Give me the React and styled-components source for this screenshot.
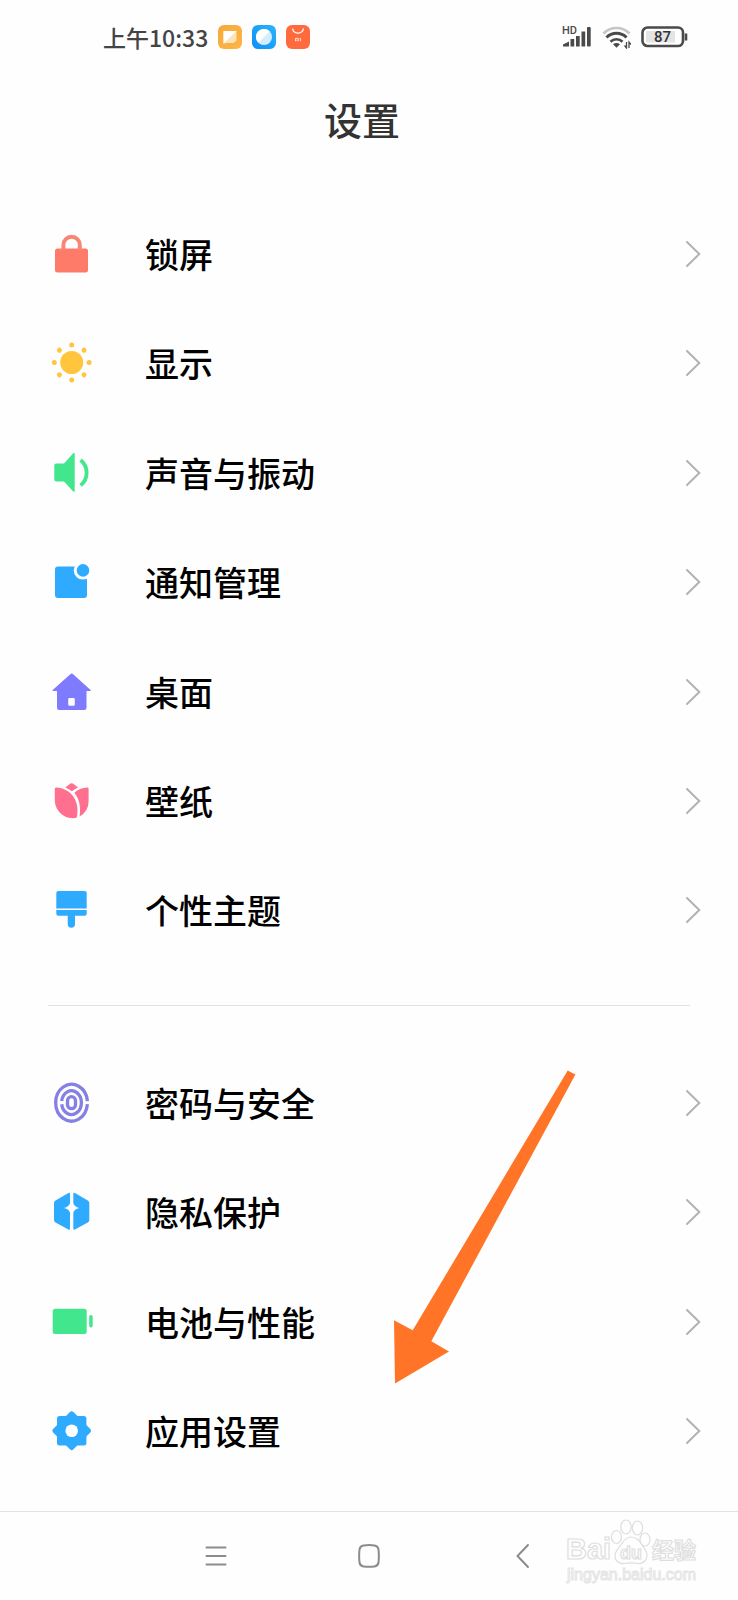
import React from "react";
import styled, { createGlobalStyle } from "styled-components";

const GlobalStyle = createGlobalStyle`
  * {
    box-sizing: border-box;
  }
  body {
    margin: 0;
    background-color: #fefefe;
    font-family: "Noto Sans CJK SC", sans-serif;
  }
`;

const Screen = styled.div`
  position: relative;
  display: flex;
  flex-direction: column;
  min-height: 100vh;
`;

const StatusBar = styled.header`
  display: flex;
  justify-content: space-between;
  align-items: center;
  height: 74px;
  padding: 0 50px 0 103px;
  color: #444;
`;

const StatusGroup = styled.div`
  display: flex;
  align-items: center;
  gap: 10px;
`;

const Clock = styled.time`
  font-size: 23px;
  font-weight: 500;
  line-height: 32px;
`;

const Title = styled.h1`
  margin: 0;
  padding: 18px 14px 53px 0;
  color: #333;
  font-size: 38px;
  font-weight: 500;
  line-height: 54px;
  text-align: center;
`;

const Main = styled.main`
  display: flex;
  flex: 1;
  flex-direction: column;
  padding-bottom: 25px;
`;

const Group = styled.ul`
  display: flex;
  flex: ${(props) => props.$rows} 0 auto;
  flex-direction: column;
  margin: 0;
  padding: 0;
  list-style: none;
`;

const Item = styled.li`
  display: flex;
  flex: 1;
  min-height: 80px;
`;

const Row = styled.button`
  display: flex;
  flex: 1;
  align-items: center;
  gap: 51px;
  padding: 0 37px 0 50px;
  border: none;
  background: none;
  color: #000;
  font-family: inherit;
  text-align: left;
  cursor: pointer;
`;

const Label = styled.span`
  flex: 1;
  font-size: 34px;
  font-weight: 500;
  line-height: 48px;
`;

const Divider = styled.hr`
  width: auto;
  height: 1px;
  margin: 40px 48px 42px;
  border: none;
  background-color: #e2e2e2;
`;

const NavBar = styled.nav`
  position: relative;
  display: flex;
  justify-content: center;
  align-items: center;
  gap: 107px;
  height: 89px;
  border-top: 1px solid #e2e2e2;
`;

const NavButton = styled.button`
  display: flex;
  justify-content: center;
  align-items: center;
  width: 46px;
  height: 46px;
  padding: 0;
  border: none;
  background: none;
  cursor: pointer;
`;

const Pointer = styled.svg`
  position: absolute;
  top: 1070px;
  left: 394px;
  pointer-events: none;
`;

const Watermark = styled.div`
  position: absolute;
  right: 38px;
  bottom: 10px;
  width: 134px;
  height: 74px;
  pointer-events: none;
`;

const ICONS = {
  lock: (
    <>
      <rect x="5" y="16.4" width="33" height="24" rx="2.5" fill="#ff7b69" />
      <path d="M13.4 18v-5a8.2 8.2 0 0 1 16.4 0v5" fill="none" stroke="#f98573" strokeWidth="4" />
    </>
  ),
  sun: (
    <g fill="#ffc53d">
      <circle cx="21.7" cy="21.5" r="11.5" />
      {[0, 45, 90, 135, 180, 225, 270, 315].map((angle) => (
        <circle key={angle} cx="21.7" cy="4.1" r="2.5" transform={`rotate(${angle} 21.7 21.5)`} />
      ))}
    </g>
  ),
  sound: (
    <g fill="#42e68d">
      <path d="M6.3 12.5H14L23 2.400q1.700-1.400 1.700.6v36.600q0 2-1.700.6L14 30.500H6.300q-2 0-2-2v-14q0-2 2-2z" />
      <path d="M30.600 9A16.400 16.400 0 0 1 30.600 34.400" fill="none" stroke="#42e68d" strokeWidth="3.800" />
    </g>
  ),
  notification: (
    <>
      <rect x="5" y="6.4" width="32" height="31.6" rx="3" fill="#2eaaff" />
      <circle cx="33" cy="10.4" r="9.2" fill="#fefefe" />
      <circle cx="33" cy="10.4" r="6.3" fill="#2eaaff" />
    </>
  ),
  home: (
    <path
      fill="#7f7bff"
      fillRule="evenodd"
      d="M20.3 4.2q1.4-1.4 2.8 0L40.6 20q.9 1-.5 1H36.5v16.5q0 2.5-2.5 2.5H9.5Q7 40 7 37.5V21H3.2q-1.4 0-.5-1zM19.600 28q-1.400 0-1.400 1.400v4.800q0 1.500 1.400 1.500h3.800q1.400 0 1.400-1.500v-4.800q0-1.400-1.400-1.400z"
    />
  ),
  tulip: (
    <g fill="#ff6f90">
      <path d="M15.300 8.400l5.200-3.800q1.200-.8 2.400 0l5.200 3.800q-3.600 1.300-6.200 3.900-2.800-2.500-6.600-3.900z" />
      <path d="M6.200 8.600C18.500 9.200 27.500 18.500 27.500 31q0 4-.8 7.700A18 18 0 0 1 4.800 22V10q0-1.400 1.400-1.400z" />
      <path d="M37.200 8.600q1.400 0 1.400 1.400v12A17.500 17.500 0 0 1 29.600 37.400C31 28 29.500 20 24.300 14c3.500-3.500 8-5.200 12.900-5.400z" />
    </g>
  ),
  brush: (
    <g fill="#2eaaff">
      <path d="M8.300 3h26.400q2 0 2 2v15.500H6.300V5q0-2 2-2z" />
      <path d="M6.300 21.900h30.400v3.800q0 2-2 2H25v8.400a3.650 3.650 0 0 1-7.300 0v-8.400H8.300q-2 0-2-2z" />
    </g>
  ),
  fingerprint: (
    <g fill="none" stroke="#8580e4" strokeWidth="3.300">
      <path d="M37.400 20.200A15.900 18.400 0 1 0 37.400 23.200" />
      <path d="M11.700 23.300A9.900 11.900 0 1 0 11.700 20" />
      <rect x="17.500" y="15.700" width="8" height="12" rx="4" />
    </g>
  ),
  privacy: (
    <g fill="#2eaaff">
      <path d="M20 4v9c-.6 2.700-2.500 4-6 4.900 3.500.9 5.400 2.300 6 4.900v15.700q0 1.800-1.600 1L5.500 32.500Q4 31.700 4 30V13q0-1.700 1.500-2.500L18.400 3Q20 2.200 20 4z" />
      <path d="M23.300 4v9c.6 2.700 2.500 4 6 4.900-3.500.9-5.400 2.300-6 4.900v15.700q0 1.800 1.600 1l12.900-7q1.500-.8 1.500-2.500V13q0-1.700-1.500-2.500L24.900 3q-1.600-.8-1.600 1z" />
    </g>
  ),
  battery: (
    <g fill="#42e68d">
      <rect x="2.7" y="8.8" width="34" height="25.3" rx="2.5" />
      <rect x="39.2" y="15" width="3.5" height="12.5" rx="1.7" />
    </g>
  ),
  gear: (
    <g fill="#2eaaff">
      <rect x="7" y="7" width="29.4" height="29.4" rx="2.5" />
      <rect x="7.300" y="7.300" width="28.800" height="28.800" rx="2.500" transform="rotate(45 21.700 21.700)" />
      <circle cx="21.7" cy="21.7" r="6.3" fill="#fefefe" />
    </g>
  ),
};

const groups = [
  [
    { icon: "lock", label: "锁屏" },
    { icon: "sun", label: "显示" },
    { icon: "sound", label: "声音与振动" },
    { icon: "notification", label: "通知管理" },
    { icon: "home", label: "桌面" },
    { icon: "tulip", label: "壁纸" },
    { icon: "brush", label: "个性主题" },
  ],
  [
    { icon: "fingerprint", label: "密码与安全" },
    { icon: "privacy", label: "隐私保护" },
    { icon: "battery", label: "电池与性能" },
    { icon: "gear", label: "应用设置" },
  ],
];

const AppIcons = () => (
  <>
    <svg width="24" height="24" viewBox="0 0 24 24">
      <defs>
        <linearGradient id="note" x1="0" y1="0" x2="1" y2="1">
          <stop offset="0" stopColor="#f5a93c" />
          <stop offset="1" stopColor="#ffb646" />
        </linearGradient>
      </defs>
      <rect width="24" height="24" rx="6" fill="url(#note)" />
      <path d="M5.5 6h13v9.5l-3 2.500h-7l-3 1z" fill="#ffe3b8" />
      <path d="M5.5 6h13L5.500 18.500z" fill="#fff" />
    </svg>
    <svg width="24" height="24" viewBox="0 0 24 24">
      <defs>
        <linearGradient id="browser" x1="0" y1="1" x2="1" y2="0">
          <stop offset="0" stopColor="#0a90f5" />
          <stop offset="1" stopColor="#2cb4fb" />
        </linearGradient>
      </defs>
      <rect width="24" height="24" rx="6" fill="url(#browser)" />
      <circle cx="12" cy="12" r="8" fill="#d3edfd" />
      <path d="M17.7 6.3A8 8 0 0 0 6.3 17.7z" fill="#fff" />
    </svg>
    <svg width="24" height="24" viewBox="0 0 24 24">
      <rect width="24" height="24" rx="6" fill="#ff6b3d" />
      <path d="M6.5 3.5a5.6 5.6 0 0 0 11 0" fill="none" stroke="#fff" strokeWidth="1.3" />
      <path d="M9.5 16.2v-2.8h2.800v2.800M11 14.600v1.600M14.400 13v3.200" fill="none" stroke="#ffe0d2" strokeWidth="1" />
    </svg>
  </>
);

const Signal = () => (
  <svg width="30" height="24" viewBox="0 0 30 24" fill="#4a4a4a">
    <text x="0" y="9" fontFamily="Roboto, sans-serif" fontSize="11" fontWeight="500">
      HD
    </text>
    <path d="M1 21.500v-2l6-3v5z" />
    <rect x="8.5" y="14" width="3.700" height="7.500" />
    <rect x="14" y="11" width="3.700" height="10.500" />
    <rect x="19.500" y="6.500" width="3.700" height="15" />
    <rect x="25" y="2" width="3.700" height="19.500" rx="1" />
  </svg>
);

const Wifi = () => (
  <svg width="29" height="24" viewBox="0 0 29 24" fill="none" strokeWidth="2.6">
    <path d="M1.500 8.500a18 18 0 0 1 26 0" stroke="#c6c6c6" />
    <path d="M4.500 12.500a14 14 0 0 1 20 0" stroke="#4a4a4a" strokeWidth="3" />
    <path d="M8.500 16.700a8.600 8.600 0 0 1 12 0" stroke="#4a4a4a" />
    <path d="M11 19.200q3.500-2.500 7 0l-3.500 3.600z" fill="#4a4a4a" />
    <path d="M24.500 17v6l-2-2.500M27 23v-6l2 2.500" stroke="#4a4a4a" strokeWidth="1.3" />
  </svg>
);

const BatteryLevel = () => (
  <svg width="47" height="22" viewBox="0 0 47 22">
    <rect x="1.5" y="1.5" width="40.5" height="18.5" rx="5" fill="none" stroke="#4a4a4a" strokeWidth="2.6" />
    <rect x="5" y="5" width="29" height="11.5" rx="1" fill="#e4e4e4" />
    <path d="M45 7.500v7" stroke="#4a4a4a" strokeWidth="2.6" />
    <text x="21.5" y="16.3" textAnchor="middle" fontFamily="Roboto, sans-serif" fontSize="15" fontWeight="500" fill="#333">
      87
    </text>
  </svg>
);

const Chevron = () => (
  <svg width="16" height="28" viewBox="0 0 16 28" fill="none" stroke="#b2b2b2" strokeWidth="2">
    <path d="M2 2l12.300 12L2 26" strokeLinecap="round" />
  </svg>
);

const SettingsGroup = ({ items }) => (
  <Group $rows={items.length}>
    {items.map((item) => (
      <Item key={item.icon}>
        <Row type="button">
          <svg width="44" height="44" viewBox="0 0 44 44" aria-hidden="true">
            {ICONS[item.icon]}
          </svg>
          <Label>{item.label}</Label>
          <Chevron />
        </Row>
      </Item>
    ))}
  </Group>
);

const BaiduMark = () => (
  <Watermark>
    <svg width="134" height="74" viewBox="0 0 134 74" fill="#fefefe" stroke="#dedede" strokeWidth="1.2">
      <g fontFamily="Liberation Sans, sans-serif" fontWeight="700">
        <text x="0" y="43" fontSize="29">
          Bai
        </text>
        <ellipse cx="50.5" cy="21" rx="5" ry="6.5" />
        <ellipse cx="60" cy="11" rx="5.2" ry="7" />
        <ellipse cx="71.500" cy="12" rx="5.200" ry="7" />
        <ellipse cx="79" cy="23.500" rx="5" ry="6.500" />
        <path d="M65 21c6 0 8.500 4 11 8s5.500 6 5 11-4.500 8-9 7.500c-5-.8-9-.8-14 0-5 .5-9-2.500-9-7.500s3-7 5.500-10.500S59 21 65 21z" />
        <text x="54" y="43" fontSize="18">
          du
        </text>
      </g>
      <text x="86" y="42" fontFamily="Noto Sans CJK SC, sans-serif" fontSize="22" fontWeight="700">
        经验
      </text>
      <text x="1" y="64" fontFamily="Liberation Sans, sans-serif" fontSize="16" stroke="#e4e4e4" strokeWidth="1">
        jingyan.baidu.com
      </text>
    </svg>
  </Watermark>
);

const App = () => {
  return (
    <>
      <GlobalStyle />
      <Screen>
        <StatusBar>
          <StatusGroup>
            <Clock>上午10:33</Clock>
            <AppIcons />
          </StatusGroup>
          <StatusGroup>
            <Signal />
            <Wifi />
            <BatteryLevel />
          </StatusGroup>
        </StatusBar>
        <Title>设置</Title>
        <Main>
          <SettingsGroup items={groups[0]} />
          <Divider />
          <SettingsGroup items={groups[1]} />
        </Main>
        <NavBar>
          <NavButton type="button" aria-label="菜单">
            <svg width="24" height="24" viewBox="0 0 24 24" stroke="#8c8c8c" strokeWidth="2" strokeLinecap="round">
              <path d="M2.500 3.500h19M2.500 12h19M2.500 20.500h19" />
            </svg>
          </NavButton>
          <NavButton type="button" aria-label="主页">
            <svg width="24" height="24" viewBox="0 0 24 24" fill="none" stroke="#8c8c8c" strokeWidth="2">
              <path d="M6.500 1.500Q12 .700 17.500 1.500 21 2 21.500 5.500q.7 6.500 0 13-.5 3.500-4 4-5.500.7-11 0-3.500-.5-4-4-.7-6.500 0-13 .5-3.500 4-4z" />
            </svg>
          </NavButton>
          <NavButton type="button" aria-label="返回">
            <svg width="16" height="26" viewBox="0 0 16 26" fill="none" stroke="#8c8c8c" strokeWidth="2" strokeLinecap="round">
              <path d="M14 2L3.500 13 14 24" />
            </svg>
          </NavButton>
          <BaiduMark />
        </NavBar>
        <Pointer width="56" height="314" viewBox="0 0 56 314" overflow="visible" fill="#ff7426">
          <path d="M173.700.5l7.700 4L37.300 271.300 55 281.500 1 313.500 0 250.300l18.700 10z" />
        </Pointer>
      </Screen>
    </>
  );
};

export default App;
